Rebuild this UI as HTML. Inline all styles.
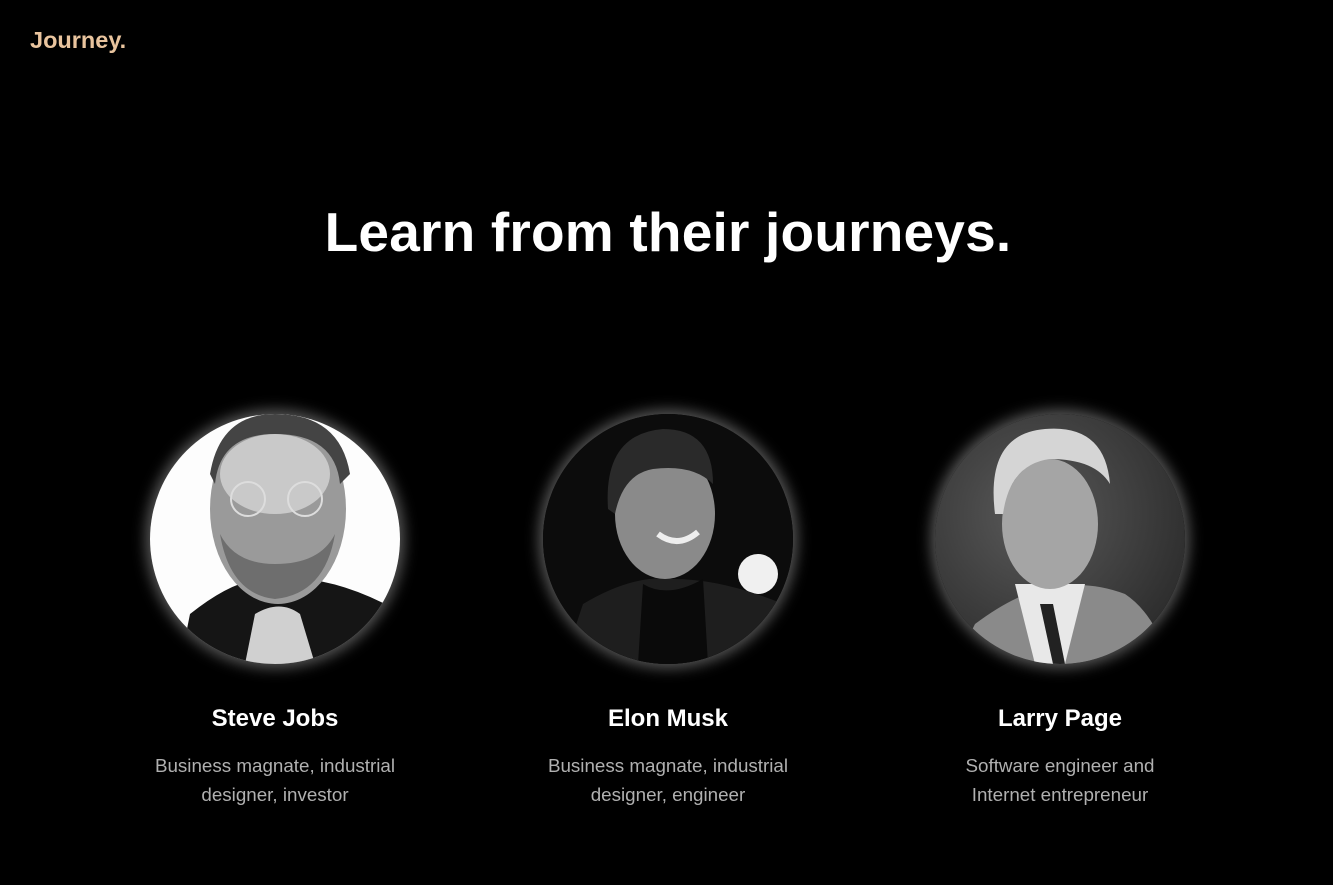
<!DOCTYPE html>
<html><head><meta charset="utf-8"><style>
html,body{margin:0;padding:0;background:#000;width:1333px;height:885px;overflow:hidden;font-family:"Liberation Sans",Arial,sans-serif}
.logo{position:absolute;left:30px;top:27px;font-size:23.5px;font-weight:bold;color:#e9c49e}
h1{position:absolute;top:200px;left:0;width:1336px;text-align:center;margin:0;font-size:55px;font-weight:bold;color:#fff;letter-spacing:0.2px}
.card{position:absolute;top:414px;width:320px;text-align:center}
.pic{width:250px;height:250px;border-radius:50%;margin:0 auto;overflow:hidden;box-shadow:0 0 14px 4px rgba(255,255,255,0.35)}
.pic svg{display:block}
.name{margin-top:41px;font-size:24px;font-weight:bold;color:#fff}
.desc{margin-top:18px;font-size:18.8px;line-height:29px;color:#b0b0b0}
</style></head><body>
<div class="logo">Journey.</div>
<h1>Learn from their journeys.</h1>

<div class="card" style="left:115px">
<div class="pic"><svg width="250" height="250" viewBox="0 0 250 250">
<rect width="250" height="250" fill="#fdfdfd"/>
<path d="M30 250 L40 200 Q90 160 125 165 Q175 160 235 190 L240 250Z" fill="#151515"/>
<ellipse cx="128" cy="95" rx="68" ry="95" fill="#9a9a9a"/>
<path d="M70 120 Q80 180 125 185 Q175 180 185 120 Q170 150 125 150 Q85 150 70 120Z" fill="#6e6e6e"/>
<path d="M60 60 Q70 0 125 0 Q190 0 200 60 L190 70 Q185 20 125 20 Q70 20 65 70Z" fill="#444"/>
<ellipse cx="125" cy="60" rx="55" ry="40" fill="#c9c9c9"/>
<circle cx="98" cy="85" r="17" fill="none" stroke="#ddd" stroke-width="2"/>
<circle cx="155" cy="85" r="17" fill="none" stroke="#ddd" stroke-width="2"/>
<path d="M105 200 Q130 185 150 200 L165 250 L95 250Z" fill="#d0d0d0"/>
</svg></div>
<div class="name">Steve Jobs</div>
<div class="desc">Business magnate, industrial<br>designer, investor</div>
</div>

<div class="card" style="left:508px">
<div class="pic"><svg width="250" height="250" viewBox="0 0 250 250">
<rect width="250" height="250" fill="#0c0c0c"/>
<circle cx="215" cy="160" r="20" fill="#f0f0f0"/>
<path d="M20 250 L40 190 Q90 160 130 165 Q180 165 240 190 L250 250Z" fill="#1e1e1e"/>
<path d="M100 170 Q125 185 160 165 L165 250 L95 250Z" fill="#0a0a0a"/>
<ellipse cx="122" cy="100" rx="50" ry="65" fill="#8a8a8a"/>
<path d="M65 95 Q60 20 120 15 Q170 15 170 70 Q150 50 110 55 Q80 60 72 100Z" fill="#2a2a2a"/>
<path d="M115 120 Q135 135 155 118" stroke="#eee" stroke-width="6" fill="none"/>
</svg></div>
<div class="name">Elon Musk</div>
<div class="desc">Business magnate, industrial<br>designer, engineer</div>
</div>

<div class="card" style="left:900px">
<div class="pic"><svg width="250" height="250" viewBox="0 0 250 250">
<defs><radialGradient id="g" cx="0.4" cy="0.4" r="0.7"><stop offset="0" stop-color="#5a5a5a"/><stop offset="1" stop-color="#2a2a2a"/></radialGradient></defs>
<rect width="250" height="250" fill="url(#g)"/>
<path d="M20 250 L40 210 Q80 180 110 175 Q150 165 190 180 Q220 200 235 250Z" fill="#8a8a8a"/>
<path d="M80 170 L100 250 L130 250 L150 170Z" fill="#e8e8e8"/>
<path d="M105 190 L118 250 L130 250 L118 190Z" fill="#222"/>
<ellipse cx="115" cy="110" rx="48" ry="65" fill="#a5a5a5"/>
<path d="M60 100 Q50 20 110 15 Q170 10 175 70 Q160 45 115 45 Q75 50 68 100Z" fill="#d5d5d5"/>
</svg></div>
<div class="name">Larry Page</div>
<div class="desc">Software engineer and<br>Internet entrepreneur</div>
</div>
</body></html>
